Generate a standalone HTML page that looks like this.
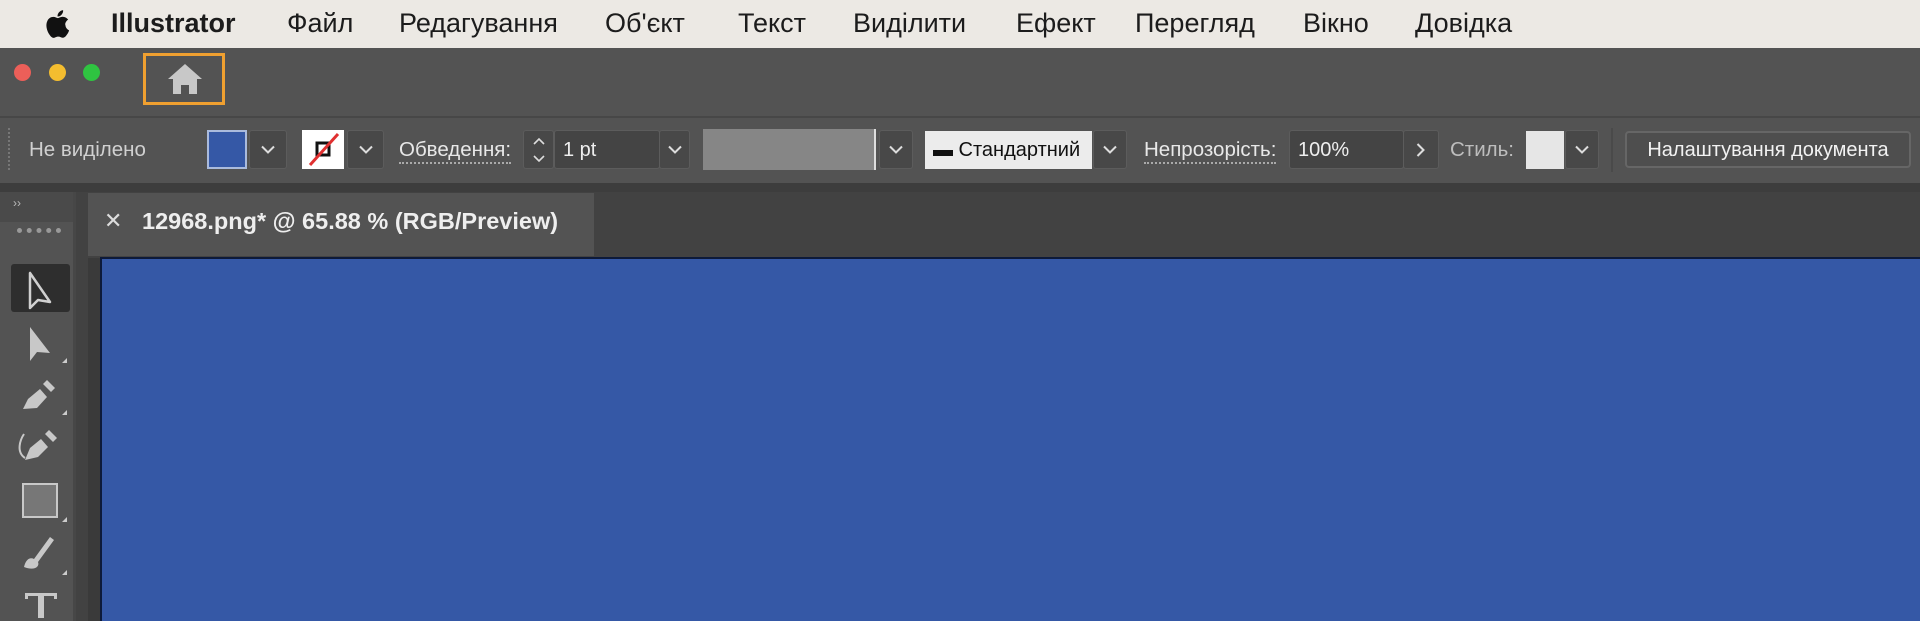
<!DOCTYPE html>
<html><head><meta charset="utf-8"><style>
*{margin:0;padding:0;box-sizing:border-box}
body{width:1920px;height:621px;overflow:hidden;background:#424242;font-family:"Liberation Sans","DejaVu Sans",sans-serif;position:relative}
.a{position:absolute}
.menu{left:0;top:0;width:1920px;height:48px;background:#ece9e4;}
.menu span{position:absolute;top:8px;font-size:27px;color:#1c1c1c}
.title{left:0;top:48px;width:1920px;height:68px;background:#535353}
.ctrl{left:0;top:116px;width:1920px;height:68px;background:#535353;border-top:2px solid #474747}
.strip{left:0;top:183px;width:1920px;height:9px;background:#3d3d3d}
.lbl{position:absolute;top:138px;font-size:20.5px;color:#d0d0d0}
.ul{border-bottom:2px dotted #aaa;padding-bottom:1px}
.dd{position:absolute;top:130px;height:39px;background:#484848;border:1px solid #5c5c5c;border-radius:3px}
.dd svg{position:absolute;left:50%;top:50%;transform:translate(-50%,-50%)}
.fld{position:absolute;top:130px;height:39px;background:#444;border:1px solid #5c5c5c;border-radius:3px;color:#eee;font-size:20px;padding:8px 8px}
.dot{position:absolute;top:64px;width:17px;height:17px;border-radius:50%}
</style></head><body>
<div class="a menu">
<svg class="a" style="left:44px;top:9px" width="26" height="30" viewBox="0 0 24 28"><path fill="#111" d="M19.6 14.8c0-3.3 2.7-4.8 2.8-4.9-1.5-2.2-3.900-2.500-4.700-2.600-2-.2-3.900 1.200-4.900 1.200-1 0-2.600-1.200-4.300-1.100-2.200 0-4.200 1.300-5.300 3.300-2.300 4-.6 9.800 1.600 13 1.100 1.600 2.400 3.300 4.100 3.200 1.600-.1 2.300-1.100 4.300-1.100 2 0 2.500 1.100 4.300 1 1.800 0 2.900-1.600 4-3.200 1.300-1.800 1.800-3.600 1.800-3.700-.1 0-3.500-1.300-3.500-5.400zM16.400 5.100c.9-1.100 1.500-2.600 1.300-4.100-1.300.1-2.900.9-3.800 2-.8.900-1.600 2.500-1.400 4 1.500.1 3-.8 3.900-1.900z"/></svg>
<span style="left:111px;font-weight:bold">Illustrator</span>
<span style="left:287px">Файл</span>
<span style="left:399px">Редагування</span>
<span style="left:605px">Об'єкт</span>
<span style="left:738px">Текст</span>
<span style="left:853px">Виділити</span>
<span style="left:1016px">Ефект</span>
<span style="left:1135px">Перегляд</span>
<span style="left:1303px">Вікно</span>
<span style="left:1415px">Довідка</span>
</div>
<div class="a title">
<div class="dot" style="left:14px;top:16px;background:#ec5f59"></div>
<div class="dot" style="left:49px;top:16px;background:#f4bd2f"></div>
<div class="dot" style="left:83px;top:16px;background:#2fc441"></div>
<div class="a" style="left:143px;top:5px;width:82px;height:52px;border:3px solid #f0a030"></div>
<svg class="a" style="left:166px;top:14px" width="38" height="34" viewBox="0 0 38 34"><path fill="#c8c8c8" d="M19 2 L36 17 L31 17 L31 32 L23 32 L23 23 L15 23 L15 32 L7 32 L7 17 L2 17 Z"/></svg>
</div>
<div class="a ctrl"></div>
<div class="a" style="left:8px;top:128px;width:3px;height:42px;border-left:2px dotted #777"></div>
<div class="lbl" style="left:29px">Не виділено</div>
<div class="a" style="left:207px;top:130px;width:40px;height:39px;background:#3558a6;border:2px solid #aabbdd"></div>
<div class="dd" style="left:249px;width:38px"><svg width="14" height="9"><path d="M1 1l6 6 6-6" stroke="#ddd" stroke-width="2" fill="none"/></svg></div>
<div class="a" style="left:302px;top:130px;width:42px;height:39px;background:#fff"><svg width="42" height="39"><rect x="15" y="13" width="12" height="12" fill="none" stroke="#111" stroke-width="3"/><path d="M8 35L36 4" stroke="#e03030" stroke-width="3"/></svg></div>
<div class="dd" style="left:347px;width:37px"><svg width="14" height="9"><path d="M1 1l6 6 6-6" stroke="#ddd" stroke-width="2" fill="none"/></svg></div>
<div class="lbl" style="left:399px;color:#e8e8e8"><span class="ul">Обведення:</span></div>
<div class="dd" style="left:523px;width:31px"><svg width="14" height="28"><path d="M2 8l5-5 5 5M2 20l5 5 5-5" stroke="#ddd" stroke-width="1.6" fill="none"/></svg></div>
<div class="fld" style="left:554px;width:106px">1 pt</div>
<div class="dd" style="left:659px;width:31px"><svg width="14" height="9"><path d="M1 1l6 6 6-6" stroke="#ddd" stroke-width="2" fill="none"/></svg></div>
<div class="a" style="left:703px;top:129px;width:173px;height:41px;background:#868686;border-right:2px solid #ddd"></div>
<div class="dd" style="left:879px;width:34px"><svg width="14" height="9"><path d="M1 1l6 6 6-6" stroke="#ddd" stroke-width="2" fill="none"/></svg></div>
<div class="a" style="left:925px;top:131px;width:167px;height:38px;background:#ececec;color:#111;font-size:20px;padding:8px 8px;white-space:nowrap"><b>▬</b> Стандартний</div>
<div class="dd" style="left:1093px;width:34px"><svg width="14" height="9"><path d="M1 1l6 6 6-6" stroke="#ddd" stroke-width="2" fill="none"/></svg></div>
<div class="lbl" style="left:1144px;color:#e8e8e8"><span class="ul">Непрозорість:</span></div>
<div class="fld" style="left:1289px;width:115px">100%</div>
<div class="dd" style="left:1403px;width:36px"><svg width="9" height="14"><path d="M1 1l6 6-6 6" stroke="#ddd" stroke-width="2" fill="none"/></svg></div>
<div class="lbl" style="left:1450px;color:#bdbdbd">Стиль:</div>
<div class="a" style="left:1526px;top:131px;width:38px;height:38px;background:#e6e6e6"></div>
<div class="dd" style="left:1565px;width:34px"><svg width="14" height="9"><path d="M1 1l6 6 6-6" stroke="#ddd" stroke-width="2" fill="none"/></svg></div>
<div class="a" style="left:1611px;top:128px;width:2px;height:44px;background:#4a4a4a"></div>
<div class="a" style="left:1625px;top:131px;width:286px;height:37px;border:2px solid #666;border-radius:4px;background:#4e4e4e;color:#f2f2f2;font-size:20px;text-align:center;padding-top:6px;white-space:nowrap">Налаштування документа</div>
<div class="a strip"></div>
<!-- left toolbar -->
<div class="a" style="left:0;top:192px;width:76px;height:429px;background:#535353;border-right:3px solid #474747"></div>
<div class="a" style="left:0;top:192px;width:73px;height:30px;background:#4a4a4a"></div>
<div class="a" style="left:13px;top:196px;color:#bbb;font-size:12px">››</div>
<div class="a" style="left:17px;top:228px;width:44px;height:5px;border-top:5px dotted #999"></div>
<div class="a" style="left:11px;top:264px;width:59px;height:48px;background:#2e2e2e;border-radius:3px"></div>
<svg class="a" style="left:0;top:255px" width="76" height="366" viewBox="0 0 76 366">
<g transform="translate(0,-4)"><path d="M30 22 L30 57 L38 49 L50 51 Z" fill="none" stroke="#d0d0d0" stroke-width="2.5" stroke-linejoin="round"/></g>
<path d="M30 72 L30 106 L37 97 L50 98 Z" fill="#c8c8c8"/><path d="M62 108l5-5v5z" fill="#ccc"/>
<g transform="translate(0,16)"><path d="M23 138 L28 128 L40 118 L47 126 L37 137 Z" fill="#c8c8c8"/><path d="M43 113l4-4 8 8-4 4z" fill="#c8c8c8"/></g><path d="M62 160l5-5v5z" fill="#ccc"/>
<g transform="translate(0,13)"><path d="M25 192 L30 180 L41 171 L48 179 L38 189 Z" fill="#c8c8c8"/><path d="M45 166l4-4 8 8-4 4z" fill="#c8c8c8"/><path d="M25 190 C16 184 20 172 24 166" fill="none" stroke="#c8c8c8" stroke-width="2"/></g>
<g transform="translate(0,8)"><rect x="23" y="221" width="34" height="33" fill="#777" stroke="#c8c8c8" stroke-width="2"/></g><path d="M62 267l5-5v5z" fill="#ccc"/>
<g transform="translate(0,6)"><path d="M24 306 C26 298 30 296 34 298 L50 276 L54 279 L38 301 C40 306 34 310 24 306Z" fill="#c8c8c8"/></g><path d="M62 320l5-5v5z" fill="#ccc"/>
<g transform="translate(0,-8)"><path d="M25 346 h32 v6 h-3 v-3 h-10 v22 h-6 v-22 h-10 v3 h-3z" fill="#c8c8c8"/></g>
</svg>
<!-- tab bar -->
<div class="a" style="left:76px;top:192px;width:1844px;height:66px;background:#424242"></div>
<div class="a" style="left:88px;top:193px;width:506px;height:63px;background:#535353"></div>
<div class="a" style="left:104px;top:208px;color:#ddd;font-size:22px">✕</div>
<div class="a" style="left:142px;top:208px;color:#eee;font-size:23.5px;font-weight:bold;white-space:nowrap">12968.png* @ 65.88 % (RGB/Preview)</div>
<div class="a" style="left:88px;top:258px;width:12px;height:363px;background:#3a3a3a"></div>
<div class="a" style="left:100px;top:257px;width:1820px;height:364px;background:#3558a6;border-top:2px solid #0d1a3a;border-left:2px solid #0d1a3a"></div>
</body></html>
